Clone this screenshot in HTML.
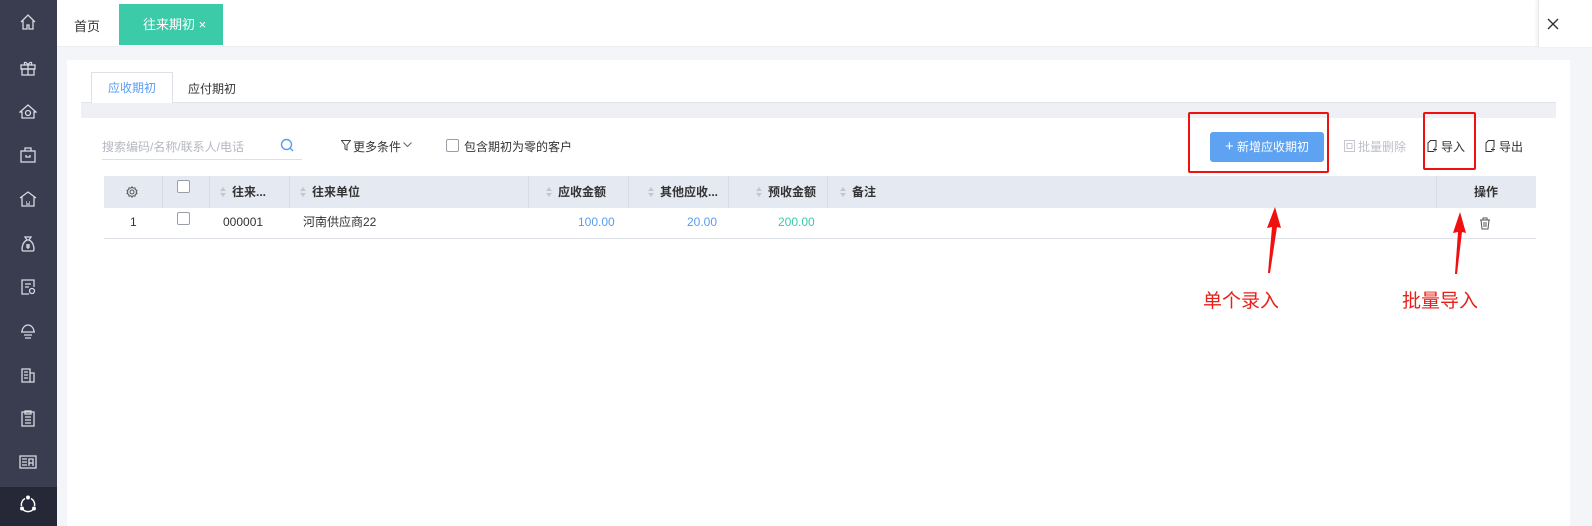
<!DOCTYPE html>
<html><head><meta charset="utf-8"><style>
*{margin:0;padding:0;box-sizing:border-box}
body{width:1592px;height:526px;overflow:hidden;background:#f3f5f8;font-family:"Liberation Sans","Noto Sans CJK SC",sans-serif;font-size:12px;color:#333;position:relative}
.abs{position:absolute}
.side{left:0;top:0;width:57px;height:526px;background:#3a3c50}
.side .ic{position:absolute;left:19px;width:18px;height:18px}
.top{left:57px;top:0;width:1535px;height:47px;background:#fff;border-bottom:1px solid #eceef2}
.card{left:67px;top:60px;width:1503px;height:466px;background:#fff}
th,td{font-weight:normal}
.hd{position:absolute;top:176px;height:32px;line-height:32px;font-weight:bold;font-size:12px;color:#333}
.vb{position:absolute;top:176px;height:32px;width:1px;background:#d8dce6}
.sort{display:inline-block;width:7px;height:10px;vertical-align:-1px;margin-right:5px;position:relative}
.sort:before{content:"";position:absolute;left:0;top:0;border:3.5px solid transparent;border-bottom:4px solid #c3c7d0;border-top:0}
.sort:after{content:"";position:absolute;left:0;top:6px;border:3.5px solid transparent;border-top:4px solid #c3c7d0;border-bottom:0}
.cell{position:absolute;top:207px;height:31px;line-height:31px;font-size:12px}
.cb{position:absolute;width:13px;height:13px;border:1px solid #9a9ea8;border-radius:2px;background:#fff}
.red{position:absolute;border:2px solid #f01010;border-radius:2px}
.lbl{position:absolute;color:#e8201a;font-size:19px;top:286px}
</style></head><body>
<div class="abs side">
<svg class="ic" style="top:13px" viewBox="0 0 18 18" fill="none" stroke="#d8dae2" stroke-width="1.3"><path d="M2 9L9 2l7 7M4 7.5V16h4v-4h2v4h4V7.5"/></svg>
<svg class="ic" style="top:59px" viewBox="0 0 18 18" fill="none" stroke="#d8dae2" stroke-width="1.3"><rect x="2" y="6" width="14" height="4"/><rect x="3" y="10" width="12" height="6"/><path d="M9 6v10M9 6C7 2 4 3 6 6M9 6c2-4 5-3 3 0"/></svg>
<svg class="ic" style="top:103px" viewBox="0 0 18 18" fill="none" stroke="#d8dae2" stroke-width="1.3"><path d="M1 9l8-7 8 7-2 0v6H3V9z"/><circle cx="9" cy="10" r="2.5"/></svg>
<svg class="ic" style="top:146px" viewBox="0 0 18 18" fill="none" stroke="#d8dae2" stroke-width="1.3"><rect x="2" y="5" width="14" height="11"/><path d="M6 5V2h6v3M7 9v2h4V9"/></svg>
<svg class="ic" style="top:190px" viewBox="0 0 18 18" fill="none" stroke="#d8dae2" stroke-width="1.3"><path d="M1 8l8-6 8 6M3 7v9h12V7M7 12h1M10 12h1M7 14h4"/></svg>
<svg class="ic" style="top:235px" viewBox="0 0 18 18" fill="none" stroke="#d8dae2" stroke-width="1.3"><path d="M6 2h6l-2 3h-2zM8 5C3 7 2 16 4 16h10c2 0 1-9-4-11"/><path d="M7 10h4M7 12h4M9 9v5"/></svg>
<svg class="ic" style="top:278px" viewBox="0 0 18 18" fill="none" stroke="#d8dae2" stroke-width="1.3"><path d="M15 9V2H3v14h7M6 6h6M6 9h4"/><circle cx="13" cy="13" r="2.5"/></svg>
<svg class="ic" style="top:322px" viewBox="0 0 18 18" fill="none" stroke="#d8dae2" stroke-width="1.3"><path d="M3 10c0-4 3-7 6-7s6 3 6 7zM2 10h14M5 13h8M6 16h6"/></svg>
<svg class="ic" style="top:366px" viewBox="0 0 18 18" fill="none" stroke="#d8dae2" stroke-width="1.3"><rect x="3" y="3" width="8" height="13"/><path d="M11 7h4v9h-4M5 6h4M5 9h4M5 12h4"/></svg>
<svg class="ic" style="top:409px" viewBox="0 0 18 18" fill="none" stroke="#d8dae2" stroke-width="1.3"><rect x="3" y="3" width="12" height="14"/><path d="M6 2h6v3H6zM6 8h6M6 11h6M6 14h6"/></svg>
<svg class="ic" style="top:453px" viewBox="0 0 18 18" fill="none" stroke="#d8dae2" stroke-width="1.3"><rect x="1" y="3" width="16" height="12"/><path d="M3 6h5M3 9h5M3 12h5M10 13V6h4v7M10 10h4"/></svg>
<div class="abs" style="left:0;top:487px;width:57px;height:39px;background:#262838"></div>
<svg class="ic" style="top:495px" viewBox="0 0 18 18" fill="none" stroke="#fff" stroke-width="1.5"><path d="M6 3.5A7 7 0 0 0 2.5 11M4 14.5a7 7 0 0 0 10 0M15.5 11A7 7 0 0 0 12 3.5"/><circle cx="9" cy="2.5" r="1.2" fill="#fff"/><circle cx="3" cy="13.5" r="1.2" fill="#fff"/><circle cx="15" cy="13.5" r="1.2" fill="#fff"/></svg>
</div>
<div class="abs top"></div>
<div class="abs" style="left:74px;top:16px;font-size:13px;color:#333">首页</div>
<div class="abs" style="left:119px;top:4px;width:104px;height:41px;background:#3bcba8;color:#fff;font-size:13px;line-height:41px;padding-left:24px">往来期初 <span style="font-size:13px">×</span></div>
<div class="abs" style="left:1538px;top:0;width:54px;height:47px;background:#fff;border-left:1px solid #e6e8ee;box-shadow:-2px 0 3px rgba(0,0,0,.05)"></div>
<svg class="abs" style="left:1547px;top:18px" width="12" height="12" viewBox="0 0 12 12" stroke="#333" stroke-width="1.4"><path d="M1 1l10 10M11 1L1 11"/></svg>
<div class="abs card"></div>
<div class="abs" style="left:81px;top:102px;width:1475px;height:16px;background:#eef0f5;border-top:1px solid #e0e3ea"></div>
<div class="abs" style="left:91px;top:72px;width:82px;height:31px;background:#fff;border:1px solid #dde0e7;border-bottom:none;color:#5a9cf0;font-size:12px;line-height:30px;text-align:center">应收期初</div>
<div class="abs" style="left:188px;top:80px;font-size:12px;color:#333">应付期初</div>
<div class="abs" style="left:102px;top:138px;font-size:12px;color:#b5b8c0">搜索编码/名称/联系人/电话</div>
<div class="abs" style="left:102px;top:159px;width:200px;height:1px;background:#dcdfe6"></div>
<svg class="abs" style="left:280px;top:138px" width="14" height="14" viewBox="0 0 14 14" fill="none" stroke="#5a9cf0" stroke-width="1.4"><circle cx="6.5" cy="6.5" r="5"/><path d="M10 10l3 3"/></svg>
<svg class="abs" style="left:341px;top:140px" width="10" height="11" viewBox="0 0 10 11" fill="none" stroke="#444" stroke-width="1"><path d="M.5 .5h9L6 5v5L4 9V5z"/></svg>
<div class="abs" style="left:353px;top:138px;font-size:12px">更多条件</div>
<svg class="abs" style="left:403px;top:142px" width="9" height="6" viewBox="0 0 9 6" fill="none" stroke="#666"><path d="M.5.5l4 4 4-4"/></svg>
<div class="cb" style="left:446px;top:139px"></div>
<div class="abs" style="left:464px;top:138px;font-size:12px">包含期初为零的客户</div>
<div class="abs" style="left:1210px;top:132px;width:114px;height:30px;background:#5ea2f2;border-radius:3px;color:#fff;font-size:12px;line-height:30px;text-align:center"><span style="font-size:15px">+</span> 新增应收期初</div>
<svg class="abs" style="left:1344px;top:140px" width="11" height="12" viewBox="0 0 11 12" fill="none" stroke="#c5c8d0"><rect x=".5" y=".5" width="10" height="11"/><rect x="3" y="3.5" width="5" height="5"/></svg>
<div class="abs" style="left:1358px;top:138px;color:#bdc0c8">批量删除</div>
<svg class="abs" style="left:1427px;top:140px" width="11" height="12" viewBox="0 0 11 12" fill="none" stroke="#333"><path d="M3 .5h6v7M7 11.5H1V3l2.5-2.5M6 9.5h4M8 7.5v4"/></svg>
<div class="abs" style="left:1441px;top:138px">导入</div>
<svg class="abs" style="left:1485px;top:140px" width="11" height="12" viewBox="0 0 11 12" fill="none" stroke="#333"><path d="M3 .5h6v7M7 11.5H1V3l2.5-2.5M6 9.5h4M8 7.5v4"/></svg>
<div class="abs" style="left:1499px;top:138px">导出</div>
<div class="abs" style="left:104px;top:176px;width:1432px;height:32px;background:#e5e9f2"></div>
<div class="abs" style="left:104px;top:238px;width:1432px;height:1px;background:#dfe2e8"></div>
<div class="vb" style="left:162px"></div><div class="vb" style="left:209px"></div><div class="vb" style="left:289px"></div><div class="vb" style="left:528px"></div><div class="vb" style="left:628px"></div><div class="vb" style="left:728px"></div><div class="vb" style="left:827px"></div><div class="vb" style="left:1436px"></div>
<svg class="abs" style="left:126px;top:186px" width="12" height="12" viewBox="0 0 12 12" fill="none" stroke="#555"><circle cx="6" cy="6" r="2"/><path d="M6 .8l1.2 1.4 1.8-.4.3 1.8 1.7.8-.8 1.6.8 1.6-1.7.8-.3 1.8-1.8-.4L6 11.2 4.8 9.8 3 10.2l-.3-1.8L1 7.6l.8-1.6L1 4.4l1.7-.8L3 1.8l1.8.4z"/></svg>
<div class="cb" style="left:177px;top:180px"></div>
<div class="hd" style="left:220px"><span class="sort"></span>往来...</div>
<div class="hd" style="left:300px"><span class="sort"></span>往来单位</div>
<div class="hd" style="left:546px"><span class="sort"></span>应收金额</div>
<div class="hd" style="left:648px"><span class="sort"></span>其他应收...</div>
<div class="hd" style="left:756px"><span class="sort"></span>预收金额</div>
<div class="hd" style="left:840px"><span class="sort"></span>备注</div>
<div class="hd" style="left:1474px">操作</div>
<div class="cell" style="left:130px">1</div>
<div class="cb" style="left:177px;top:212px"></div>
<div class="cell" style="left:223px">000001</div>
<div class="cell" style="left:303px">河南供应商22</div>
<div class="cell" style="left:578px;color:#5a9cf0">100.00</div>
<div class="cell" style="left:687px;color:#5a9cf0">20.00</div>
<div class="cell" style="left:778px;color:#3bcba8">200.00</div>
<svg class="abs" style="left:1479px;top:217px" width="12" height="13" viewBox="0 0 12 13" fill="none" stroke="#555"><path d="M1 3h10M4 3V1h4v2M2 3l1 9h6l1-9M5 5v5M7 5v5"/></svg>
<div class="red" style="left:1188px;top:112px;width:141px;height:61px"></div>
<div class="red" style="left:1423px;top:112px;width:53px;height:58px"></div>
<svg class="abs" style="left:1255px;top:204px" width="30" height="72" viewBox="0 0 30 72"><path d="M20 3L12 24l5-1-4 46h2l7-46 4 1z" fill="#f01010"/></svg>
<svg class="abs" style="left:1444px;top:209px" width="30" height="68" viewBox="0 0 30 68"><path d="M16 3L9 24l5-1-3 42h2l5-42 4 1z" fill="#f01010"/></svg>
<div class="lbl" style="left:1203px">单个录入</div>
<div class="lbl" style="left:1402px">批量导入</div>
</body></html>
